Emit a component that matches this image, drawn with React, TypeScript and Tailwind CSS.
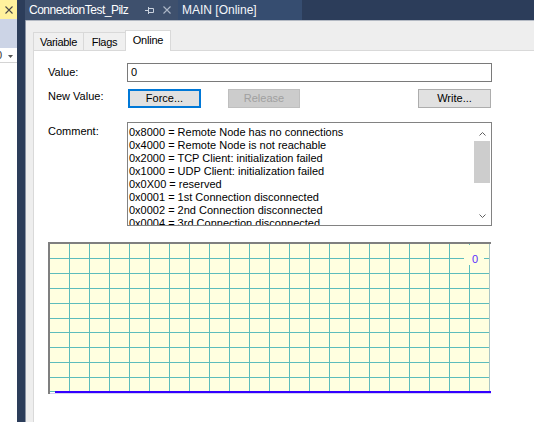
import React from "react";

const lines = [
  "0x8000 = Remote Node has no connections",
  "0x4000 = Remote Node is not reachable",
  "0x2000 = TCP Client: initialization failed",
  "0x1000 = UDP Client: initialization failed",
  "0x0X00 = reserved",
  "0x0001 = 1st Connection disconnected",
  "0x0002 = 2nd Connection disconnected",
  "0x0004 = 3rd Connection disconnected",
];

function Chart() {
  const vx = Array.from({ length: 21 }, (_, k) => 21 + 20 * k);
  const hy = [16, 31, 46, 61, 76, 90, 105, 120, 135];
  return (
    <svg width="443" height="152" viewBox="0 0 443 152" className="block" shapeRendering="crispEdges">
      <rect x="0" y="0" width="443" height="152" fill="#ffffff" />
      <rect x="2" y="2" width="440" height="147" fill="#ffffe0" />
      {vx.map((x) => (
        <rect key={"v" + x} x={x} y={2} width={1} height={147} fill="#5cbcbc" />
      ))}
      {hy.map((y) => (
        <rect key={"h" + y} x={2} y={y} width={440} height={1} fill="#5cbcbc" />
      ))}
      <rect x={441} y={2} width={1} height={147} fill="#a9c4c4" />
      <rect x="416" y="3" width="20" height="20" fill="#ffffe0" />
      <text x="424" y="21" fontSize="11" fontFamily="'Liberation Sans', Arial, sans-serif" fill="#5a2cff" shapeRendering="auto">0</text>
      <rect x="0" y="0" width="443" height="2" fill="#7f7f7f" />
      <rect x="0" y="0" width="2" height="152" fill="#7f7f7f" />
      <rect x="2" y="149" width="5" height="1" fill="#5cbcbc" />
      <rect x="7" y="149" width="436" height="2" fill="#3300ff" />
      <rect x="2" y="151" width="441" height="1" fill="#d6d0f4" />
    </svg>
  );
}

export default function App() {
  return (
    <div className="w-[534px] h-[422px] overflow-hidden flex bg-white font-['Liberation_Sans',Arial,sans-serif] text-black">
      {/* left strip */}
      <div className="w-[17px] shrink-0 flex flex-col">
        <div className="h-[19px] bg-[#fff29d] flex items-center justify-center">
          <svg width="8" height="8" viewBox="0 0 8 8">
            <path d="M0.5 0.5 L7.5 7.5 M7.5 0.5 L0.5 7.5" stroke="#4a4a4a" strokeWidth="1.1" fill="none" />
          </svg>
        </div>
        <div className="h-[29px] bg-[#ccd4e6]" />
        <div className="h-[15px] bg-white border-b border-[#d4d4d4] relative overflow-hidden">
          <span className="absolute left-[-4px] top-[1px] text-[11px] leading-[13px] text-[#333]">0</span>
          <svg width="5" height="3" viewBox="0 0 5 3" className="absolute left-[8px] top-[7px]">
            <path d="M0 0 H5 L2.5 3 Z" fill="#555" />
          </svg>
        </div>
        <div className="flex-1 bg-white" />
      </div>

      {/* right side */}
      <div className="flex-1 flex flex-col bg-[#2c3d5a]">
        {/* title bar */}
        <div className="h-[20px] shrink-0 flex items-stretch pl-[8px]">
          <div className="w-[153px] bg-[#3e506d] flex items-center pl-[4px]">
            <span className="w-[116px] text-[12px] tracking-[-0.5px] text-white whitespace-nowrap leading-[14px]">ConnectionTest_Pilz</span>
            <svg width="9" height="9" viewBox="0 0 9 9" className="shrink-0">
              <path d="M0 4.5 H3 M3.5 1 V8 M3.5 2.5 H8.5 V6.5 H3.5" stroke="#c9d1dd" strokeWidth="1" fill="none" />
            </svg>
            <svg width="8" height="8" viewBox="0 0 8 8" className="ml-[9px] shrink-0">
              <path d="M0.5 0.5 L7.5 7.5 M7.5 0.5 L0.5 7.5" stroke="#aeb8c8" strokeWidth="1.1" fill="none" />
            </svg>
          </div>
          <div className="w-[124px] bg-[#364d70] flex items-center pl-[4px]">
            <span className="text-[12px] text-[#f4f6fa] whitespace-nowrap leading-[14px]">MAIN [Online]</span>
          </div>
        </div>

        {/* body */}
        <div className="flex-1 flex min-h-0">
          <div className="w-[8px] shrink-0 bg-[#2c3d5a]" />
          <div className="w-[1px] shrink-0 bg-[#8c95a5]" />
          <div className="flex-1 flex flex-col bg-[#eeeeee] border-t border-[#b3b9c3] min-w-0">
            {/* tabs */}
            <div className="h-[20px] mt-[9px] flex items-end pl-[7px] shrink-0 relative z-10">
              <div className="w-[51px] h-[18px] border border-b-0 border-[#d9d9d9] bg-[#f0f0f0] flex items-center justify-center text-[11px] tracking-[-0.3px] leading-[13px] pt-[1px]">
                Variable
              </div>
              <div className="w-[41px] h-[18px] border-t border-r-0 border-[#d9d9d9] bg-[#f0f0f0] flex items-center justify-center text-[11px] tracking-[-0.3px] leading-[13px] pt-[1px]">
                Flags
              </div>
              <div className="w-[46px] h-[21px] -mb-px border border-b-0 border-[#d9d9d9] bg-white flex items-start justify-center text-[11px] tracking-[-0.2px] leading-[13px] pt-[3px]">
                Online
              </div>
            </div>

            {/* panel */}
            <div className="flex-1 ml-[7px] bg-white border-t border-l border-[#d9d9d9] pl-[14px] pt-[12px] text-[11px] leading-[13px]">
              {/* value row */}
              <div className="flex items-start">
                <div className="w-[79px] pt-[2.5px]">Value:</div>
                <div className="w-[365px] h-[19px] border border-[#7a7a7a] flex items-center pl-[3px]">0</div>
              </div>
              {/* new value row */}
              <div className="flex items-start mt-[7px]">
                <div className="w-[80px] pt-[0.5px]">New Value:</div>
                <div className="w-[73px] h-[19px] border-2 border-[#0078d7] bg-[#e1e1e1] flex items-center justify-center">
                  Force...
                </div>
                <div className="w-[72px] h-[19px] ml-[27px] border border-[#bfbfbf] bg-[#cccccc] text-[#a0a0a0] flex items-center justify-center">
                  Release
                </div>
                <div className="w-[73px] h-[19px] ml-[118px] border border-[#adadad] bg-[#e1e1e1] flex items-center justify-center">
                  Write...
                </div>
              </div>
              {/* comment row */}
              <div className="flex items-start mt-[14px]">
                <div className="w-[79px] pt-[2.5px]">Comment:</div>
                <div className="w-[365px] h-[104px] border border-[#828282] relative overflow-hidden">
                  <div className="pl-[1px] pt-[3px] whitespace-nowrap">
                    {lines.map((l) => (
                      <div key={l} className="h-[13px] leading-[13px]">{l}</div>
                    ))}
                  </div>
                  <div className="absolute right-0 top-0 bottom-0 w-[17px] bg-white">
                    <svg width="7" height="4" viewBox="0 0 7 4" className="absolute left-[5px] top-[9px]">
                      <path d="M0.5 3.5 L3.5 0.5 L6.5 3.5" stroke="#606060" strokeWidth="1" fill="none" />
                    </svg>
                    <div className="absolute left-0 right-[1px] top-[18px] h-[42px] bg-[#cdcdcd]" />
                    <svg width="7" height="4" viewBox="0 0 7 4" className="absolute left-[5px] bottom-[7px]">
                      <path d="M0.5 0.5 L3.5 3.5 L6.5 0.5" stroke="#606060" strokeWidth="1" fill="none" />
                    </svg>
                  </div>
                </div>
              </div>
              {/* chart */}
              <div className="mt-[16px] w-[443px] h-[152px]">
                <Chart />
              </div>
            </div>
          </div>
        </div>
      </div>
    </div>
  );
}
